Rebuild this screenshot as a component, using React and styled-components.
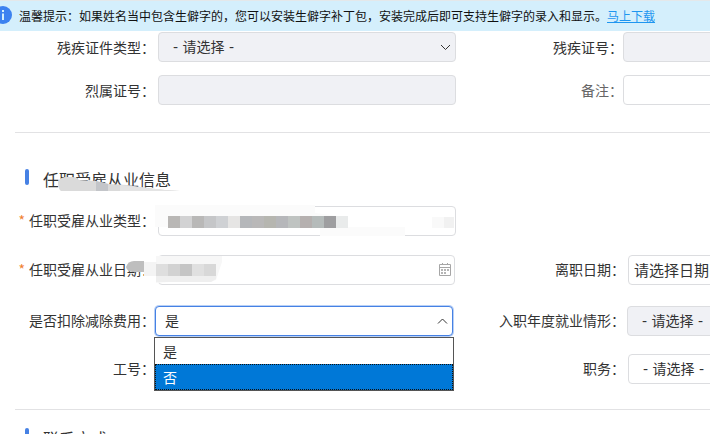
import React, { useState } from 'react'
import styled, { createGlobalStyle, css } from 'styled-components'

const GlobalStyle = createGlobalStyle`
  * {
    box-sizing: border-box;
  }

  body {
    margin: 0;
    overflow: hidden;
    background: #fff;
    color: #333;
    font-family: 'Noto Sans CJK SC', 'Open Sans', sans-serif;
    font-size: 14px;
  }
`

const Page = styled.div`
  height: 100vh;
  overflow: hidden;
`

const Notice = styled.div`
  display: flex;
  align-items: center;
  height: 31px;
  padding-bottom: 2px;
  border-top: 1px solid #e4e8ea;
  background: #d4effc;
  color: #111;
  font-size: 12px;
  white-space: nowrap;
`

const NoticeIcon = styled.svg`
  flex: none;
  width: 18px;
  height: 18px;
  margin: 0 7px 0 -6px;
`

const NoticeLink = styled.a`
  color: #1e96f0;
`

const Section = styled.section`
  position: relative;
  margin-left: 15px;
  padding: ${({ $first }) => ($first ? '1px 0 27px' : '34px 0 25px')};
  border-bottom: 1px solid #e2e2e4;

  &:last-child {
    padding-top: 16px;
    border-bottom: 0;
  }
`

const Heading = styled.h2`
  display: flex;
  align-items: center;
  gap: 14px;
  margin: 0 0 15px 10px;
  font-size: 16px;
  font-weight: 400;
  line-height: 24px;

  &::before {
    content: '';
    width: 4px;
    height: 16px;
    margin-bottom: 4px;
    border-radius: 2px;
    background: #4681e4;
  }
`

const Grid = styled.div`
  display: grid;
  align-items: start;
  grid-template-columns: 140px minmax(301px, 1fr) 167px minmax(301px, 1fr);
  grid-auto-rows: 30px;
  row-gap: 13px;
  line-height: 30px;
`

const JobGrid = styled(Grid)`
  grid-template-columns: 140px minmax(301px, 1fr) 169px minmax(301px, 1fr);
  grid-template-rows: 31px 33px 30px;
  row-gap: 18px;
  line-height: 28px;
`

const Label = styled.label`
  color: ${({ $muted }) => ($muted ? '#666' : '#333')};
  text-align: right;
  white-space: nowrap;
`

const Star = styled.span`
  margin-right: 4px;
  color: #f08030;
`

const Field = styled.div`
  position: relative;
  display: flex;
  margin-left: ${({ $gap = 3 }) => $gap}px;
  margin-right: ${({ $end = 0 }) => $end}px;
`

const control = css`
  flex: 1;
  min-width: 0;
  height: 30px;
  margin: 0;
  border: 1px solid #dcdde0;
  border-radius: 4px;
  outline: 0;
  background: #fff;
  color: #333;
  font-family: inherit;
  font-size: 14px;
  opacity: 1;

  &:disabled {
    background: #f0f1f5;
  }
`

const Input = styled.input`
  ${control}
  padding: 0 5px;

  &::placeholder {
    color: #333;
    font-size: 15px;
    opacity: 1;
  }
`

const Select = styled.select`
  ${control}
  padding: 0 30px 0 14px;
  font-family: 'DejaVu Sans', 'Noto Sans CJK SC', sans-serif;
  appearance: none;

  ${({ $open }) =>
    $open &&
    css`
      padding-left: 9px;
      border-color: #4681e4;
      box-shadow: 0 0 0 1px #b8d0f6;
    `}
`

const Arrow = styled.svg`
  position: absolute;
  top: 11px;
  right: 5px;
  width: 11px;
  height: 8px;
  pointer-events: none;
`

const CalendarIcon = styled.svg`
  position: absolute;
  top: 8px;
  right: 4px;
  width: 12px;
  height: 13px;
`

const Options = styled.ul`
  position: absolute;
  z-index: 2;
  top: 31px;
  right: -1px;
  left: -1px;
  margin: 0;
  padding: 0;
  border: 1px solid #555;
  background: #fff;
  list-style: none;
`

const Option = styled.li`
  padding: 0 7px;
  border: 1px dotted ${({ $active }) => ($active ? '#111' : 'transparent')};
  background: ${({ $active }) => ($active ? '#0078d7' : '#fff')};
  color: ${({ $active }) => ($active ? '#fff' : '#333')};
  line-height: 24px;
  cursor: default;
`

const Smudge = styled.svg`
  position: absolute;
  z-index: 1;
  top: ${({ $top }) => $top}px;
  left: ${({ $left }) => $left}px;
  pointer-events: none;
`

const typeBlocks = [
  '#b9b7b5', '#d2d2d3', '#b9b8b7', '#c5c6c8', '#cfd1d4', '#e6e5e4', '#b5b7ba',
  '#b9b8b8', '#b6b6b0', '#b6b7ba', '#bfc3c1', '#b5b0af', '#b5bbba', '#9e9ea0', '#e9ebeb'
]

const dateBlocks = ['#dedede', '#d2d2d2', '#c5c5c5', '#e0e0e0', '#d8d8d8']

const Chevron = ({ up }) => (
  <Arrow viewBox='0 0 11 8' aria-hidden='true'>
    <path d={up ? 'M1 6.5 5.5 2 10 6.5' : 'M1 2 5.5 6.5 10 2'} fill='none' stroke='#333' />
  </Arrow>
)

const SelectField = ({ id, gap, disabled }) => (
  <Field $gap={gap}>
    <Select id={id} disabled={disabled}>
      <option>- 请选择 -</option>
    </Select>
    <Chevron />
  </Field>
)

const choices = ['是', '否']

export default function App () {
  const [value, setValue] = useState('是')
  const [active, setActive] = useState('否')

  return (
    <Page>
      <GlobalStyle />
      <Notice>
        <NoticeIcon viewBox='0 0 18 18' aria-hidden='true'>
          <circle cx='9' cy='9' r='9' fill='#3c82f0' />
          <path d='M9 4v2M9 7.5V14' stroke='#d4effc' strokeWidth='2' />
        </NoticeIcon>
        温馨提示：如果姓名当中包含生僻字的，您可以安装生僻字补丁包，安装完成后即可支持生僻字的录入和显示。
        <NoticeLink href='#download'>马上下载</NoticeLink>
      </Notice>

      <Section $first>
        <Grid>
          <Label htmlFor='cardType'>残疾证件类型：</Label>
          <SelectField id='cardType' disabled />
          <Label htmlFor='cardNo'>残疾证号：</Label>
          <Field $gap={0}>
            <Input id='cardNo' disabled />
          </Field>
          <Label htmlFor='martyrNo'>烈属证号：</Label>
          <Field>
            <Input id='martyrNo' disabled />
          </Field>
          <Label htmlFor='remark' $muted>备注：</Label>
          <Field $gap={0}>
            <Input id='remark' />
          </Field>
        </Grid>
      </Section>

      <Section>
        <Heading>任职受雇从业信息</Heading>
        <Smudge $top={43} $left={42} width='124' height='16'>
          <path d='M1 6Q2 2 8 1L15 1Q20 1 22 4L39 5 52 8 70 9 90 12 108 14 123 15H4Q1 13 1 6Z' fill='#dadada' />
          <path d='M39 5 51 8V15H39Z' fill='#c3c5c9' />
          <path d='M63 9 90 12 108 14 123 15H63Z' fill='#e4e4e4' />
        </Smudge>
        <JobGrid>
          <Label htmlFor='jobType'><Star>*</Star>任职受雇从业类型：</Label>
          <Field>
            <Input id='jobType' />
            <Smudge $top={-3} $left={-3} width='302' height='36'>
              <path d='M0 2H160V10L190 14V24H250V33H165V24H0Z' fill='#fbfbfb' />
              {typeBlocks.map((fill, i) => (
                <rect key={i} x={13 + i * 12} y='13' width='12' height='12' fill={fill} />
              ))}
              <rect x='277' y='14' width='12' height='11' fill='#f9f9f9' />
              <rect x='289' y='14' width='10' height='11' fill='#f1f1f1' />
            </Smudge>
          </Field>
          <span />
          <span />

          <Label htmlFor='startDate'><Star>*</Star>任职受雇从业日期：</Label>
          <Field $end={1}>
            <Input id='startDate' />
            <Smudge $top={0} $left={-33} width='100' height='30'>
              <path d='M31 1H97V7L91 25 85 27H44L31 28Z' fill='#f7f7f7' />
              <path d='M31 21H91V24L86 27H31Z' fill='#efefef' />
              <rect x='19' y='7' width='13' height='14' fill='#f4f4f4' />
              {dateBlocks.map((fill, i) => (
                <rect key={i} x={31 + i * 12} y='9' width='12' height='12' fill={fill} />
              ))}
              <path d='M1 12Q3 6 9 6H19V17H9Q2 17 1 12Z' fill='#bebebe' />
            </Smudge>
            <CalendarIcon viewBox='0 0 12 13' aria-hidden='true'>
              <path d='M.5 1.500h11v11H.5ZM.5 4.500h11M3.500 0v2M8.500 0v2' fill='none' stroke='#a6a6a6' />
              <path d='M2 7h8M2 10h5' stroke='#b5b5b5' strokeWidth='2' strokeDasharray='2 1' />
            </CalendarIcon>
          </Field>
          <Label htmlFor='endDate'>离职日期：</Label>
          <Field>
            <Input id='endDate' placeholder='请选择日期' />
          </Field>

          <Label htmlFor='deduct'>是否扣除减除费用：</Label>
          <Field $gap={0} $end={3}>
            <Select id='deduct' $open value={value} onChange={(e) => setValue(e.target.value)}>
              {choices.map((choice) => <option key={choice}>{choice}</option>)}
            </Select>
            <Chevron up />
            <Options role='listbox' aria-label='是否扣除减除费用'>
              {choices.map((choice) => (
                <Option
                  key={choice}
                  role='option'
                  aria-selected={choice === value}
                  $active={choice === active}
                  onMouseEnter={() => setActive(choice)}
                  onClick={() => setValue(choice)}
                >
                  {choice}
                </Option>
              ))}
            </Options>
          </Field>
          <Label htmlFor='situation'>入职年度就业情形：</Label>
          <SelectField id='situation' gap={2} disabled />

          <Label htmlFor='workNo'>工号：</Label>
          <Field $gap={0} $end={3}>
            <Input id='workNo' />
          </Field>
          <Label htmlFor='post'>职务：</Label>
          <SelectField id='post' />
        </JobGrid>
      </Section>

      <Section>
        <Heading>联系方式</Heading>
      </Section>
    </Page>
  )
}
